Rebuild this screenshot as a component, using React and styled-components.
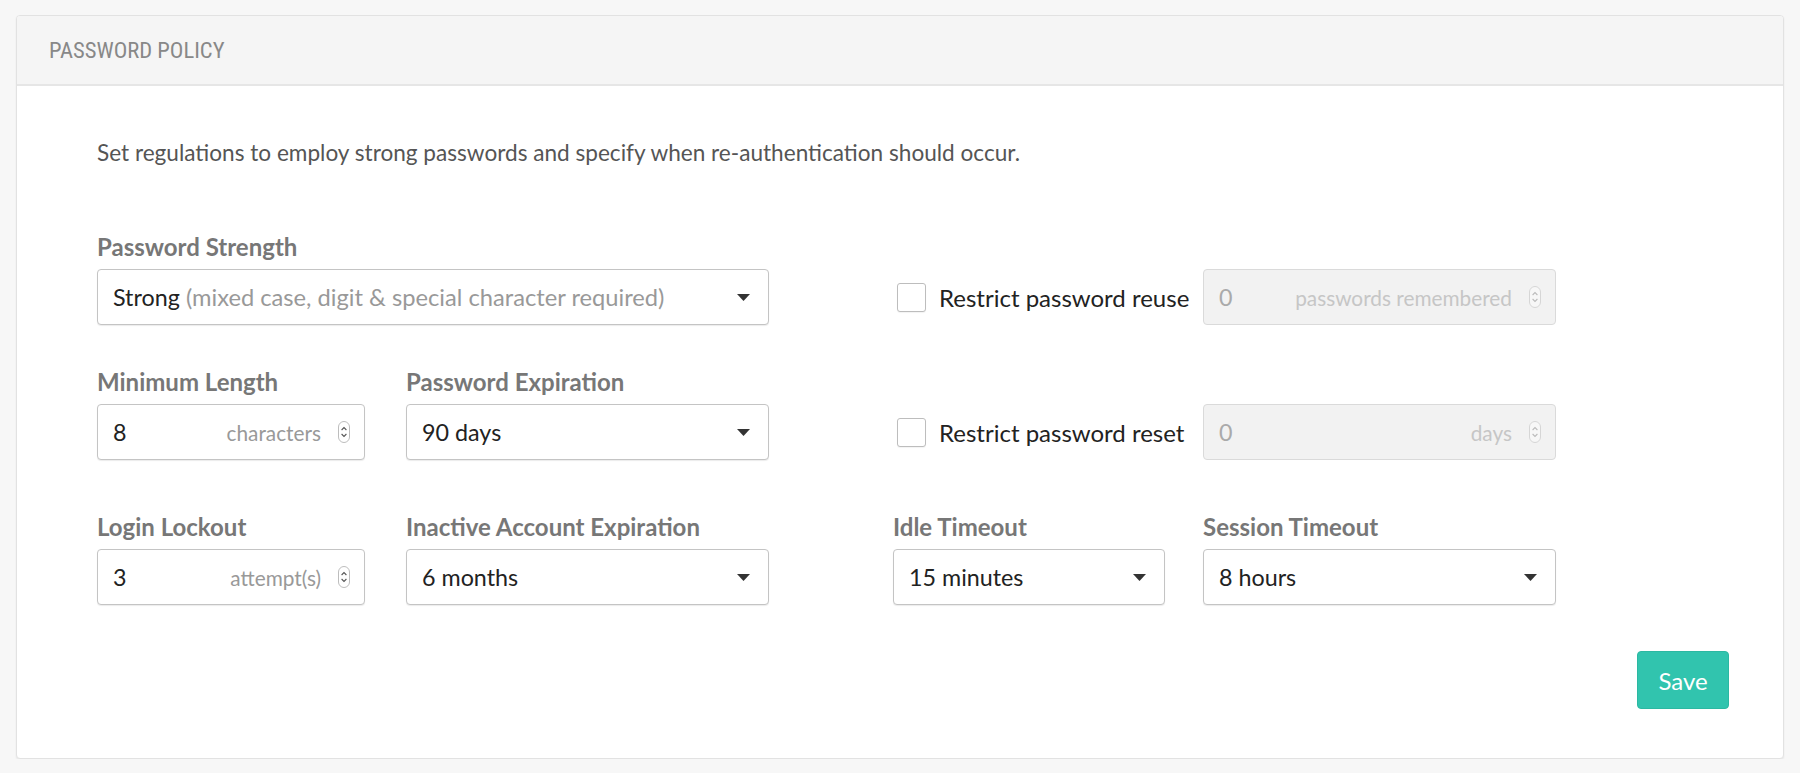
import React from "react";
import styled, { createGlobalStyle } from "styled-components";

const GlobalStyle = createGlobalStyle`
  html, body {
    margin: 0;
    padding: 0;
    background: #f7f7f7;
  }
  * {
    box-sizing: border-box;
  }
`;

function Caret() {
  return (
    <svg width="13" height="7" viewBox="0 0 13 7">
      <path d="M0 0 L13 0 L6.5 7 Z" fill="#333" />
    </svg>
  );
}

function Spinner({ disabled }) {
  const c = disabled ? "#bbb" : "#555";
  return (
    <svg width="12" height="22" viewBox="0 0 12 22">
      <rect x="0.5" y="0.5" width="11" height="21" rx="5.5" fill={disabled ? "#f7f7f7" : "#fff"} stroke={disabled ? "#d6d6d6" : "#bdbdbd"} />
      <path d="M3.6 9 L6 6.6 L8.4 9" fill="none" stroke={c} strokeWidth="1.1" />
      <path d="M3.6 13 L6 15.4 L8.4 13" fill="none" stroke={c} strokeWidth="1.1" />
    </svg>
  );
}

const SelectField = ({ value, hint }) => (
  <StBox>
    <StValue>
      {value}
      {hint ? <StHint> {hint}</StHint> : null}
    </StValue>
    <Caret />
  </StBox>
);

const NumberField = ({ value, unit, disabled }) => (
  <StBox $number $disabled={disabled}>
    <StValue $disabled={disabled}>{value}</StValue>
    <StUnit $disabled={disabled}>{unit}</StUnit>
    <Spinner disabled={disabled} />
  </StBox>
);

const Field = ({ label, children }) => (
  <div>
    <StLabel>{label}</StLabel>
    {children}
  </div>
);

const CheckRow = ({ label }) => (
  <StCheckRow>
    <StCheck />
    <span>{label}</span>
  </StCheckRow>
);

function App() {
  return (
    <>
      <GlobalStyle />
      <StCard>
        <StHeader>PASSWORD POLICY</StHeader>
        <StBody>
          <StIntro>
            Set regulations to employ strong passwords and specify when re-authentication should occur.
          </StIntro>

          <StRow $top={68}>
            <StLeftPair>
              <StWide>
                <Field label="Password Strength">
                  <SelectField value="Strong" hint="(mixed case, digit & special character required)" />
                </Field>
              </StWide>
            </StLeftPair>
            <StRightPair>
              <CheckRow label="Restrict password reuse" />
              <NumberField value="0" unit="passwords remembered" disabled />
            </StRightPair>
          </StRow>

          <StRow $top={44}>
            <StLeftPair>
              <Field label="Minimum Length">
                <NumberField value="8" unit="characters" />
              </Field>
              <Field label="Password Expiration">
                <SelectField value="90 days" />
              </Field>
            </StLeftPair>
            <StRightPair>
              <CheckRow label="Restrict password reset" />
              <NumberField value="0" unit="days" disabled />
            </StRightPair>
          </StRow>

          <StRow $top={54}>
            <StLeftPair>
              <Field label="Login Lockout">
                <NumberField value="3" unit="attempt(s)" />
              </Field>
              <Field label="Inactive Account Expiration">
                <SelectField value="6 months" />
              </Field>
            </StLeftPair>
            <StRightPair>
              <Field label="Idle Timeout">
                <SelectField value="15 minutes" />
              </Field>
              <Field label="Session Timeout">
                <SelectField value="8 hours" />
              </Field>
            </StRightPair>
          </StRow>

          <StFooter>
            <StSaveBtn type="button">Save</StSaveBtn>
          </StFooter>
        </StBody>
      </StCard>
    </>
  );
}

export default App;

const StCard = styled.div`
  margin: 15px 16px 0 16px;
  background: #fff;
  border: 1px solid #e2e2e2;
  border-radius: 4px;
  box-shadow: 0 1px 2px rgba(0, 0, 0, 0.07);
  font-family: "Lato", "Liberation Sans", sans-serif;
  overflow: hidden;
`;

const StHeader = styled.div`
  height: 70px;
  display: flex;
  align-items: center;
  padding: 1px 0 0 32px;
  background: #f5f5f5;
  border-bottom: 2px solid #e6e6e6;
  font-family: "Liberation Sans Narrow", "Roboto Condensed", "Liberation Sans", sans-serif;
  font-stretch: condensed;
  font-size: 22.6px;
  color: #888;
`;

const StBody = styled.div`
  padding: 54px 54px 49px 80px;
`;

const StIntro = styled.div`
  font-size: 22.6px;
  line-height: 26px;
  color: #555;
`;

const StRow = styled.div`
  display: grid;
  grid-template-columns: 672px 663px;
  column-gap: 124px;
  align-items: end;
  margin-top: ${(p) => p.$top}px;
`;

const StLeftPair = styled.div`
  display: grid;
  grid-template-columns: 268px 1fr;
  column-gap: 41px;
  align-items: end;
`;

const StRightPair = styled.div`
  display: grid;
  grid-template-columns: 272px 1fr;
  column-gap: 38px;
  align-items: end;
`;

const StWide = styled.div`
  grid-column: 1 / -1;
`;

const StLabel = styled.div`
  font-size: 24px;
  line-height: 26px;
  font-weight: 700;
  color: #777;
  margin-bottom: 9px;
  white-space: nowrap;
`;

const StBox = styled.div`
  height: 56px;
  display: flex;
  align-items: center;
  padding: 0 ${(p) => (p.$number ? 14 : 18)}px 0 15px;
  border: 1px solid ${(p) => (p.$disabled ? "#dadada" : "#c4c4c4")};
  border-radius: 4px;
  background: ${(p) => (p.$disabled ? "#f2f2f2" : "#fff")};
  box-shadow: ${(p) => (p.$disabled ? "none" : "0 1px 1px rgba(0, 0, 0, 0.08)")};
  font-size: 23.3px;
`;

const StValue = styled.div`
  flex: 1;
  white-space: nowrap;
  color: ${(p) => (p.$disabled ? "#aaa" : "#222")};
`;

const StHint = styled.span`
  font-size: 23.7px;
  color: #999;
`;

const StUnit = styled.span`
  font-size: 20.8px;
  margin-right: 17px;
  color: ${(p) => (p.$disabled ? "#c6c6c6" : "#999")};
  white-space: nowrap;
`;

const StCheckRow = styled.label`
  height: 56px;
  display: flex;
  align-items: center;
  gap: 13px;
  padding-left: 4px;
  font-size: 24px;
  color: #222;
  white-space: nowrap;
`;

const StCheck = styled.span`
  width: 29px;
  height: 29px;
  flex: none;
  border: 1px solid #bdbdbd;
  border-radius: 3px;
  background: #fff;
  box-shadow: 0 1px 1px rgba(0, 0, 0, 0.05);
`;

const StFooter = styled.div`
  display: flex;
  justify-content: flex-end;
  margin-top: 46px;
`;

const StSaveBtn = styled.button`
  width: 92px;
  height: 58px;
  border: 1px solid #2cb8a2;
  border-radius: 4px;
  background: #31c4ae;
  color: #fff;
  font-family: "Lato", "Liberation Sans", sans-serif;
  font-size: 24px;
  cursor: pointer;
`;
